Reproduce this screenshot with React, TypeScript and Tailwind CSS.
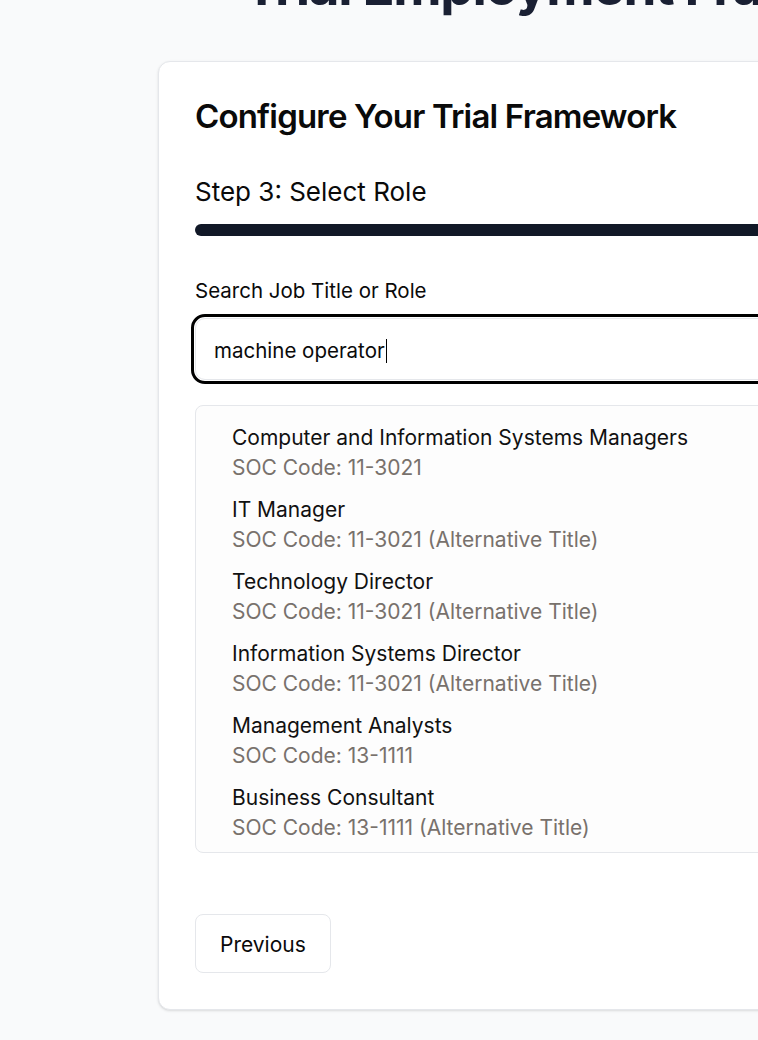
import React from 'react';

interface RoleOption {
  title: string;
  code: string;
  alternative?: boolean;
}

const roles: RoleOption[] = [
  { title: 'Computer and Information Systems Managers', code: '11-3021' },
  { title: 'IT Manager', code: '11-3021', alternative: true },
  { title: 'Technology Director', code: '11-3021', alternative: true },
  { title: 'Information Systems Director', code: '11-3021', alternative: true },
  { title: 'Management Analysts', code: '13-1111' },
  { title: 'Business Consultant', code: '13-1111', alternative: true },
  { title: 'Process Improvement Specialist', code: '13-1111', alternative: true },
];

const RoleItem: React.FC<{ role: RoleOption }> = ({ role }) => (
  <li className="px-7 py-1.5 cursor-pointer">
    <div className="text-[21px] leading-[30px] text-[#111111]">{role.title}</div>
    <div className="text-[21px] leading-[30px] text-[#78716c]">
      SOC Code: {role.code}
      {role.alternative && ' (Alternative Title)'}
    </div>
  </li>
);

export default function App() {
  return (
    <div
      className="h-[1040px] w-full overflow-hidden bg-gray-50"
      style={{ fontFamily: 'Inter, "Noto Sans", sans-serif' }}
    >
      <div className="pl-[158px] w-[1100px]">
        {/* Page title, scrolled mostly out of view */}
        <h1 className="-mt-[40px] ml-[86px] whitespace-nowrap text-[53px] leading-[52px] font-bold tracking-tight text-[#1a2033]">
          Trial Employment Framework
        </h1>

        {/* Wizard card */}
        <div className="mt-[49px] w-[900px] rounded-xl border border-gray-200 bg-white p-[36px] shadow-sm">
          <h2 className="text-[33px] leading-[36px] font-semibold tracking-tight text-[#0a0a0a]">
            Configure Your Trial Framework
          </h2>

          <h3 className="mt-[42px] text-[26px] leading-[32px] text-[#0a0a0a]">Step 3: Select Role</h3>

          <div className="mt-[16px] h-3 w-full rounded-full bg-[#111827]" />

          <label className="mt-[42px] block text-[20.5px] leading-[26px] text-[#0a0a0a]">
            Search Job Title or Role
          </label>

          <div className="mt-[14px] flex h-[62px] items-center rounded-[10px] border border-gray-200 bg-white px-[18px] pt-[4px] outline-3 outline-offset-1 outline-black">
            <span className="text-[20.5px] text-[#0a0a0a]">machine operator</span>
            <span className="ml-px h-[24px] w-px bg-black" />
          </div>

          <ul className="mt-[25px] h-[448px] overflow-hidden rounded-lg border border-gray-200 bg-[#fdfdfd] px-2 pt-[11px]">
            {roles.map((role) => (
              <RoleItem key={role.title} role={role} />
            ))}
          </ul>

          <button className="mt-[61px] h-[59px] rounded-lg border border-gray-200 bg-white px-[24px] pt-[3px] text-[21px] text-[#0a0a0a]">
            Previous
          </button>
        </div>
      </div>
    </div>
  );
}
